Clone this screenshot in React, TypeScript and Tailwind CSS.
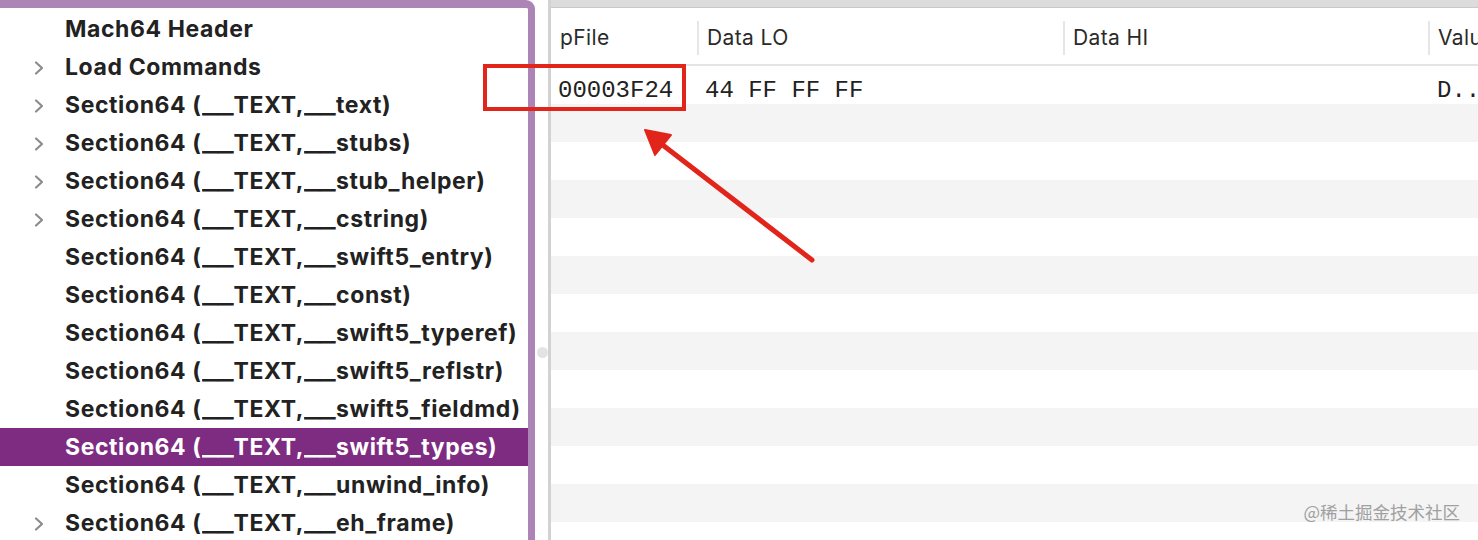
import React from "react";

const items: { label: string; chevron: boolean; selected?: boolean }[] = [
  { label: "Mach64 Header", chevron: false },
  { label: "Load Commands", chevron: true },
  { label: "Section64 (__TEXT,__text)", chevron: true },
  { label: "Section64 (__TEXT,__stubs)", chevron: true },
  { label: "Section64 (__TEXT,__stub_helper)", chevron: true },
  { label: "Section64 (__TEXT,__cstring)", chevron: true },
  { label: "Section64 (__TEXT,__swift5_entry)", chevron: false },
  { label: "Section64 (__TEXT,__const)", chevron: false },
  { label: "Section64 (__TEXT,__swift5_typeref)", chevron: false },
  { label: "Section64 (__TEXT,__swift5_reflstr)", chevron: false },
  { label: "Section64 (__TEXT,__swift5_fieldmd)", chevron: false },
  { label: "Section64 (__TEXT,__swift5_types)", chevron: false, selected: true },
  { label: "Section64 (__TEXT,__unwind_info)", chevron: false },
  { label: "Section64 (__TEXT,__eh_frame)", chevron: true },
];

function Chevron({ white }: { white?: boolean }) {
  return (
    <svg width="12" height="16" viewBox="0 0 12 16" className="block">
      <path
        d="M3 2.5 L9 8 L3 13.5"
        fill="none"
        stroke={white ? "#ffffff" : "#8c8c8c"}
        strokeWidth="2.2"
        strokeLinecap="round"
        strokeLinejoin="round"
      />
    </svg>
  );
}

function Label({ text }: { text: string }) {
  const parts = text.split(/(_+)/);
  return (
    <span className="whitespace-nowrap font-['Inter','Liberation_Sans',sans-serif] text-[23px] font-bold leading-none tracking-[0.6px]">
      {parts.map((p, i) =>
        p.length > 1 && p.startsWith("_") ? (
          <span key={i} className="mr-[11px] inline-block origin-left scale-x-[1.48] tracking-[-0.5px]">
            {p}
          </span>
        ) : (
          <React.Fragment key={i}>{p}</React.Fragment>
        )
      )}
    </span>
  );
}

export default function App() {
  const rows = Array.from({ length: 12 });
  return (
    <div className="relative flex h-[540px] w-[1478px] overflow-hidden bg-white">
      {/* Left tree pane */}
      <div className="flex h-[560px] w-[535px] shrink-0 flex-col overflow-hidden rounded-tr-[9px] border-t-[8px] border-r-[7px] border-[#ac85b6] bg-white pt-[2px]">
        {items.map((it, i) => (
          <div
            key={i}
            className={
              "flex h-[38px] shrink-0 items-center pt-[1px] " +
              (it.selected ? "bg-[#7d2c82] text-white" : "text-[#222222]")
            }
          >
            <div className="flex w-[65px] shrink-0 justify-start pl-[33px]">
              {it.chevron ? <Chevron white={it.selected} /> : null}
            </div>
            <Label text={it.label} />
          </div>
        ))}
      </div>

      {/* Splitter */}
      <div className="relative w-[13px] shrink-0 bg-white">
        <div className="absolute left-[2px] top-[347px] h-[11px] w-[11px] rounded-full bg-[#e3e3e3]" />
      </div>

      {/* Right table pane */}
      <div className="flex min-w-0 flex-1 flex-col border-l-[3px] border-[#d2d2d2] bg-white">
        <div className="h-[8px] shrink-0 border-b border-[#c9c9c9] bg-[#dcdcdc]" />
        <div className="flex h-[58px] shrink-0 items-center border-b-[2px] border-[#e4e4e4] pt-[3px] font-['Inter','Liberation_Sans',sans-serif] text-[21px] tracking-[0.4px] text-[#2a2a2a]">
          <div className="w-[146px] shrink-0 pl-[9px]">pFile</div>
          <div className="h-[34px] w-[2px] shrink-0 bg-[#e6e6e6]" />
          <div className="w-[364px] shrink-0 pl-[8px]">Data LO</div>
          <div className="h-[34px] w-[2px] shrink-0 bg-[#e6e6e6]" />
          <div className="w-[363px] shrink-0 pl-[8px]">Data HI</div>
          <div className="h-[34px] w-[2px] shrink-0 bg-[#e6e6e6]" />
          <div className="whitespace-nowrap pl-[8px]">Valu</div>
        </div>
        {rows.map((_, i) => (
          <div
            key={i}
            className={
              "flex h-[38px] shrink-0 items-center font-['Liberation_Mono',monospace] text-[24px] text-[#222222] " +
              (i % 2 === 1 ? "bg-[#f4f4f4]" : "bg-white")
            }
          >
            {i === 0 ? (
              <>
                <div className="w-[154px] shrink-0 pl-[7px] pt-[11px]">00003F24</div>
                <div className="w-[732px] shrink-0 pt-[11px]">44 FF FF FF</div>
                <div className="whitespace-nowrap pt-[11px]">D..</div>
              </>
            ) : null}
          </div>
        ))}
      </div>

      {/* Annotation overlay */}
      <div className="pointer-events-none absolute left-[483px] top-[64px] h-[47px] w-[203px] border-[4px] border-[#e1251b]" />
      <svg
        className="pointer-events-none absolute left-0 top-0"
        width="1478"
        height="540"
        viewBox="0 0 1478 540"
      >
        <line x1="812" y1="260" x2="664" y2="146" stroke="#e1251b" strokeWidth="5" strokeLinecap="round" />
        <polygon points="645,130 671,135 655,155" fill="#e1251b" stroke="#e1251b" strokeWidth="2" strokeLinejoin="round" />
      </svg>

      <div className="pointer-events-none absolute right-[18px] top-[501px] font-['Noto_Sans_CJK_SC',sans-serif] text-[17.5px] leading-[22px] text-[#a0a0a0]">
        @稀土掘金技术社区
      </div>
    </div>
  );
}
